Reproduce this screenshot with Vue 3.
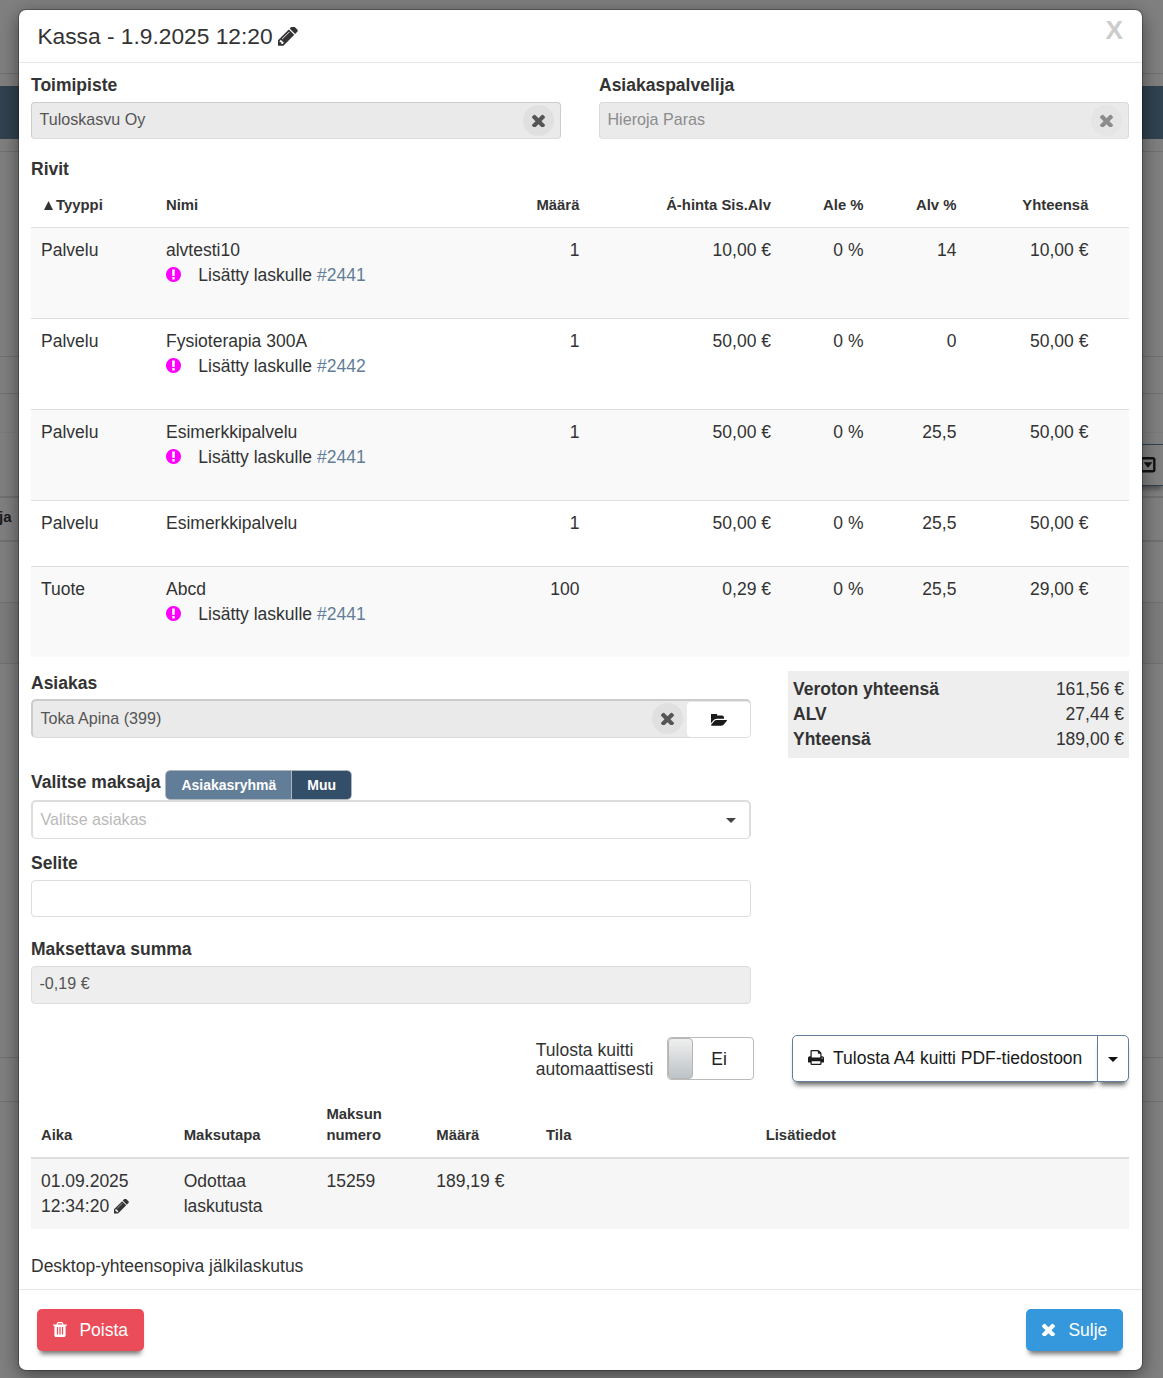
<template>
  <div class="page">
    <div class="underlay">
      <div class="strip top"></div>
      <div class="strip gap"></div>
      <div class="strip navbar"></div>
      <div class="strip gap-line"></div>
      <div class="strip h205"></div>
      <div class="strip h37"></div>
      <div class="strip h39"></div>
      <div class="strip h11"></div>
      <div class="strip toolbar">
        <svg class="square-caret" viewBox="0 0 16 16">
          <rect x="1.3" y="1.3" width="13" height="13" rx="1.5" fill="none" stroke="currentColor" stroke-width="2.4" />
          <path d="M3.6 5.2h8.8L8 10.8z" fill="currentColor" />
        </svg>
      </div>
      <div class="strip h12"></div>
      <div class="strip heading"><b>ja</b></div>
      <div class="strip h61"></div>
      <div class="strip h61 striped"></div>
      <div class="strip h394"></div>
      <div class="strip h44"></div>
    </div>

    <div class="modal">
      <header class="modal-header">
        <h4>
          Kassa - 1.9.2025 12:20
          <svg class="icon pencil" viewBox="128 256 1536 1408"><path :d="icons.pencil" /></svg>
        </h4>
        <button class="close">X</button>
      </header>

      <div class="modal-body">
        <div class="top-fields">
          <div>
            <label>Toimipiste</label>
            <div class="select disabled">
              <span>Tuloskasvu Oy</span>
              <i class="clear"><svg viewBox="302 302 1188 1188"><path :d="icons.times" /></svg></i>
            </div>
          </div>
          <div>
            <label>Asiakaspalvelija</label>
            <div class="select disabled faded">
              <span>Hieroja Paras</span>
              <i class="clear"><svg viewBox="302 302 1188 1188"><path :d="icons.times" /></svg></i>
            </div>
          </div>
        </div>

        <label class="rows-label">Rivit</label>
        <table class="rows">
          <colgroup>
            <col class="c-type" /><col class="c-name" /><col class="c-amount" /><col class="c-price" />
            <col class="c-pct" /><col class="c-pct" /><col class="c-total" /><col class="c-rest" />
          </colgroup>
          <thead>
            <tr>
              <th><svg class="sort" viewBox="0 0 9 9"><path d="M4.5 0L9 9H0z" /></svg>Tyyppi</th>
              <th>Nimi</th>
              <th class="num">Määrä</th>
              <th class="num">Á-hinta Sis.Alv</th>
              <th class="num">Ale %</th>
              <th class="num">Alv %</th>
              <th class="num">Yhteensä</th>
              <th></th>
            </tr>
          </thead>
          <tbody>
            <tr v-for="(row, i) in rows" :key="i">
              <td>{{ row.type }}</td>
              <td>
                {{ row.name }}
                <div v-if="row.invoice" class="invoiced">
                  <svg viewBox="128 128 1536 1536"><path :d="icons.exclamation" /></svg>
                  <span>Lisätty laskulle <a>{{ row.invoice }}</a></span>
                </div>
              </td>
              <td class="num">{{ row.amount }}</td>
              <td class="num">{{ row.price }}</td>
              <td class="num">0 %</td>
              <td class="num">{{ row.vat }}</td>
              <td class="num">{{ row.total }}</td>
              <td></td>
            </tr>
          </tbody>
        </table>

        <div class="middle">
          <div class="form">
            <label>Asiakas</label>
            <div class="select large disabled">
              <span>Toka Apina (399)</span>
              <i class="clear"><svg viewBox="302 302 1188 1188"><path :d="icons.times" /></svg></i>
              <button class="open">
                <svg viewBox="0 256 1815 1280"><path :d="icons.folder" /></svg>
              </button>
            </div>

            <div class="payer-label">
              <label>Valitse maksaja</label>
              <div class="btn-group">
                <button>Asiakasryhmä</button>
                <button class="active">Muu</button>
              </div>
            </div>
            <div class="select large payer">
              <span>Valitse asiakas</span>
              <b class="caret"></b>
            </div>

            <label class="selite">Selite</label>
            <div class="text-input"></div>

            <label class="summa">Maksettava summa</label>
            <div class="text-input readonly">-0,19 €</div>
          </div>

          <div class="totals">
            <div><b>Veroton yhteensä</b><span>161,56 €</span></div>
            <div><b>ALV</b><span>27,44 €</span></div>
            <div><b>Yhteensä</b><span>189,00 €</span></div>
          </div>
        </div>

        <div class="print-row">
          <div class="print-text">Tulosta kuitti<br />automaattisesti</div>
          <div class="switch"><i></i><span>Ei</span></div>
          <div class="print-btn">
            <button class="main">
              <svg viewBox="64 128 1664 1536"><path :d="icons.print" /></svg>
              Tulosta A4 kuitti PDF-tiedostoon
            </button>
            <button class="drop"><b class="caret"></b></button>
          </div>
        </div>

        <table class="payments">
          <thead>
            <tr>
              <th v-for="h in paymentHeads" :key="h">{{ h }}</th>
            </tr>
          </thead>
          <tbody>
            <tr>
              <td>
                01.09.2025 12:34:20
                <svg class="icon pencil" viewBox="128 256 1536 1408"><path :d="icons.pencil" /></svg>
              </td>
              <td>Odottaa laskutusta</td>
              <td>15259</td>
              <td>189,19 €</td>
              <td></td>
              <td></td>
            </tr>
          </tbody>
        </table>
        <p class="note">Desktop-yhteensopiva jälkilaskutus</p>
      </div>

      <footer class="modal-footer">
        <button class="btn danger">
          <svg viewBox="192 128 1408 1536"><path :d="icons.trash" /></svg>Poista
        </button>
        <button class="btn primary">
          <svg class="x" viewBox="302 302 1188 1188"><path :d="icons.times" /></svg>Sulje
        </button>
      </footer>
    </div>
  </div>
</template>

<script setup>
const rows = [
  { type: 'Palvelu', name: 'alvtesti10', invoice: '#2441', amount: '1', price: '10,00 €', vat: '14', total: '10,00 €' },
  { type: 'Palvelu', name: 'Fysioterapia 300A', invoice: '#2442', amount: '1', price: '50,00 €', vat: '0', total: '50,00 €' },
  { type: 'Palvelu', name: 'Esimerkkipalvelu', invoice: '#2441', amount: '1', price: '50,00 €', vat: '25,5', total: '50,00 €' },
  { type: 'Palvelu', name: 'Esimerkkipalvelu', invoice: '', amount: '1', price: '50,00 €', vat: '25,5', total: '50,00 €' },
  { type: 'Tuote', name: 'Abcd', invoice: '#2441', amount: '100', price: '0,29 €', vat: '25,5', total: '29,00 €' }
]

const paymentHeads = ['Aika', 'Maksutapa', 'Maksun numero', 'Määrä', 'Tila', 'Lisätiedot']

const icons = {
  pencil: 'M491 1536l91-91-235-235-91 91v107h128v128h107zm523-928q0-22-22-22-10 0-17 7l-542 542q-7 7-7 17 0 22 22 22 10 0 17-7l542-542q7-7 7-17zm-54-192l416 416-832 832h-416v-416zm683 96q0 53-37 90l-166 166-416-416 166-165q36-38 90-38 53 0 91 38l235 234q37 39 37 91z',
  times: 'M1490 1322q0 40-28 68l-136 136q-28 28-68 28t-68-28l-294-294-294 294q-28 28-68 28t-68-28l-136-136q-28-28-28-68t28-68l294-294-294-294q-28-28-28-68t28-68l136-136q28-28 68-28t68 28l294 294 294-294q28-28 68-28t68 28l136 136q28 28 28 68t-28 68l-294 294 294 294q28 28 28 68z',
  exclamation: 'M896 128q209 0 385.5 103t279.5 279.5 103 385.5-103 385.5-279.5 279.5-385.5 103-385.5-103-279.5-279.5-103-385.5 103-385.5 279.5-279.5 385.5-103zm128 1247v-190q0-14-9-23.5t-22-9.5h-192q-13 0-23 10t-10 23v190q0 13 10 23t23 10h192q13 0 22-9.5t9-23.5zm-2-344l18-621q0-12-10-18-10-8-24-8h-220q-14 0-24 8-10 6-10 18l17 621q0 10 10 17.5t24 7.5h185q14 0 23.5-7.5t10.5-17.5z',
  folder: 'M1815 952q0 31-31 66l-336 396q-43 51-120.5 86.5t-143.5 35.5h-1088q-34 0-60.5-13t-26.5-43q0-31 31-66l336-396q43-51 120.5-86.5t143.5-35.5h1088q34 0 60.5 13t26.5 43zm-343-344v160h-832q-94 0-197 47.5t-164 119.5l-337 396-5 6q0-4-.5-12.5t-.5-12.5v-960q0-92 66-158t158-66h320q92 0 158 66t66 158v32h544q92 0 158 66t66 158z',
  print: 'M448 1536h896v-256h-896v256zm0-640h896v-384h-160q-40 0-68-28t-28-68v-160h-640v640zm1152 64q0-26-19-45t-45-19-45 19-19 45 19 45 45 19 45-19 19-45zm128 0v416q0 13-9.5 22.5t-22.5 9.5h-224v160q0 40-28 68t-68 28h-960q-40 0-68-28t-28-68v-160h-224q-13 0-22.5-9.5t-9.5-22.5v-416q0-79 56.5-135.5t135.5-56.5h64v-544q0-40 28-68t68-28h672q40 0 88 20t76 48l152 152q28 28 48 76t20 88v256h64q79 0 135.5 56.5t56.5 135.5z',
  trash: 'M704 1376v-704q0-14-9-23t-23-9h-64q-14 0-23 9t-9 23v704q0 14 9 23t23 9h64q14 0 23-9t9-23zm256 0v-704q0-14-9-23t-23-9h-64q-14 0-23 9t-9 23v704q0 14 9 23t23 9h64q14 0 23-9t9-23zm256 0v-704q0-14-9-23t-23-9h-64q-14 0-23 9t-9 23v704q0 14 9 23t23 9h64q14 0 23-9t9-23zm-544-992h448l-48-117q-7-9-17-11h-317q-10 2-17 11zm928 32v64q0 14-9 23t-23 9h-96v948q0 83-47 143.5t-113 60.5h-832q-66 0-113-58.5t-47-141.5v-952h-96q-14 0-23-9t-9-23v-64q0-14 9-23t23-9h309l70-167q15-37 54-63t79-26h320q40 0 79 26t54 63l70 167h309q14 0 23 9t9 23z'
}
</script>

<style scoped>
* {
  box-sizing: border-box;
}
.page {
  display: grid;
  width: 1163px;
  height: 1378px;
  overflow: hidden;
  background: #808080;
  color: #333;
  font-family: "Liberation Sans", Arial, sans-serif;
  font-size: 17.5px;
  line-height: 25px;
}
svg {
  fill: currentColor;
  display: block;
}
button {
  font: inherit;
  color: inherit;
  border: 0;
  padding: 0;
  background: none;
}

/* dimmed page behind the dialog */
.underlay,
.modal {
  grid-area: 1 / 1;
}
.strip {
  border-bottom: 1px solid #717171;
}
.strip.top { height: 74px; }
.strip.gap { height: 12px; border: 0; }
.strip.navbar { height: 53px; border: 0; background: #314250; }
.strip.gap-line { height: 13px; }
.strip.h205 { height: 205px; }
.strip.h37 { height: 37px; }
.strip.h39 { height: 39px; border-color: #7a7a7a; }
.strip.h11 { height: 11px; border: 0; }
.strip.toolbar {
  height: 42px;
  border: 1px solid #314250;
  border-width: 1px 0;
  box-shadow: 0 4px 5px -1px rgba(0, 0, 0, 0.4);
  display: flex;
  align-items: center;
  justify-content: flex-end;
  padding-right: 7px;
  margin-left: 600px;
}
.square-caret {
  width: 16px;
  height: 16px;
  color: #111;
}
.strip.h12 { height: 12px; border-bottom-width: 2px; }
.strip.heading {
  height: 44px;
  border-bottom-width: 2px;
  font-size: 15px;
  line-height: 38px;
  color: #1a1a1a;
}
.strip.heading b { margin-left: -1px; }
.strip.h61 { height: 61px; }
.strip.striped { background: #7c7c7c; }
.strip.h394 { height: 394px; }
.strip.h44 { height: 44px; }

.modal {
  display: flex;
  flex-direction: column;
  margin: 10px 21px 8px 19px;
  background: #fff;
  border-radius: 7px;
  box-shadow: 0 0 0 1px rgba(0, 0, 0, 0.25), 0 5px 19px rgba(0, 0, 0, 0.5);
}
.modal-header {
  display: flex;
  justify-content: space-between;
  height: 53px;
  padding: 0 19px 0 18.4px;
  border-bottom: 1px solid #e5e5e5;
}
.modal-header h4 {
  display: flex;
  margin: 0;
  font-size: 22.75px;
  font-weight: 400;
  line-height: 52px;
}
.modal-header .pencil {
  width: 20px;
  height: 19px;
  margin: 17px 0 0 5.5px;
}
.close {
  height: 40px;
  font-size: 26.25px;
  font-weight: 700;
  color: #ccc;
}

.modal-body {
  padding: 10px 13px 0 12px;
}
label {
  display: block;
  font-weight: 700;
}
.top-fields {
  display: grid;
  grid-template-columns: 530px 530px;
  justify-content: space-between;
}
.top-fields .select {
  margin-top: 4px;
}
.select {
  display: flex;
  align-items: center;
  height: 37px;
  padding: 0 6px 0 7.5px;
  border: 1px solid #ddd;
  border-color: #ccc #ccc #ddd;
  border-radius: 4px;
  font-size: 16.1px;
  color: #555;
}
.select span {
  flex: 1;
  line-height: 24px;
  padding-bottom: 4px;
}
.select.disabled {
  background: #eaeaea;
}
.select.faded {
  color: #8c8c8c;
  border-color: #d9d9d9 #d9d9d9 #e4e4e4;
}
.clear {
  display: flex;
  align-items: center;
  justify-content: center;
  width: 31px;
  height: 31px;
  border-radius: 50%;
  background: #e0e0e0;
}
.clear svg {
  width: 13px;
  height: 13px;
}
.faded .clear {
  background: #e5e5e5;
}
.select.large {
  height: 39px;
  padding: 0 0 0 7.5px;
  border-width: 2px 1px 1px 2px;
  border-color: #ccc #ddd #ddd #ccc;
  border-radius: 5px;
}
.select.large span {
  padding-bottom: 3px;
}
.select.large .clear {
  margin-bottom: 1px;
}
.open {
  display: flex;
  align-items: center;
  justify-content: center;
  width: 63px;
  height: 35px;
  margin-left: 4px;
  background: #fff;
  border-radius: 4px;
  color: #1a1a1a;
}
.open svg {
  width: 16px;
  height: 12px;
  margin-top: 1px;
}

.rows-label {
  margin-top: 18px;
}
table {
  width: 100%;
  table-layout: fixed;
  border-collapse: collapse;
}
th {
  padding: 10px;
  font-size: 14.875px;
  line-height: 21px;
  text-align: left;
  vertical-align: bottom;
}
td {
  padding: 10px;
  vertical-align: top;
}
.num {
  text-align: right;
}
.rows {
  margin-top: 2px;
  border-collapse: separate;
  border-spacing: 0;
}
.rows th {
  height: 43px;
  padding-bottom: 11px;
}
.rows td {
  padding-bottom: 30px;
  border-top: 1px solid #ddd;
}
.rows .num {
  padding-right: 9.6px;
}
.rows .num:nth-child(4),
.rows .num:nth-child(5) {
  padding-right: 10px;
}
.rows tbody tr:nth-child(odd) {
  background: #f9f9f9;
}
.c-type { width: 125px; }
.c-name { width: 343px; }
.c-amount { width: 90px; }
.c-price { width: 192px; }
.c-pct { width: 92.5px; }
.c-total { width: 132px; }
.c-rest { width: 31px; }
.sort {
  display: inline-block;
  width: 9px;
  height: 9px;
  margin: 0 3px 0 3px;
}
.invoiced {
  display: flex;
  align-items: center;
  gap: 17.3px;
}
.invoiced svg {
  width: 15px;
  height: 15px;
  margin-bottom: 2px;
  color: #f0f;
}
.invoiced a {
  color: #627d98;
}

.middle {
  display: flex;
  justify-content: space-between;
  align-items: flex-start;
  margin-top: 14px;
}
.form {
  width: 720px;
}
.form > .select.disabled {
  margin-top: 3px;
}
.payer-label {
  display: flex;
  gap: 5px;
  margin-top: 32px;
}
.btn-group {
  display: flex;
  height: 30px;
  border: 1px solid #b0b6bd;
  border-radius: 5px;
  overflow: hidden;
  color: #fff;
  font-size: 14px;
  font-weight: 700;
}
.btn-group button {
  padding: 0 15px;
  background: #627d98;
}
.btn-group .active {
  background: #334e68;
  border-left: 1px solid #b0b6bd;
}
.select.payer {
  border-width: 2px 2px 1px;
  border-color: #ddd;
  color: #b9b9b9;
  padding-right: 13px;
}
.caret {
  border: 5px solid transparent;
  border-top-color: #444;
  border-bottom: 0;
}
.selite {
  margin-top: 12px;
}
.text-input {
  height: 37px;
  margin-top: 4px;
  padding: 0 7.5px;
  border: 1px solid #ddd;
  border-radius: 4px;
  font-size: 16.1px;
  line-height: 32px;
  color: #555;
}
.summa {
  margin-top: 20px;
}
.text-input.readonly {
  height: 38px;
  background: #eee;
}
.totals {
  width: 341px;
  padding: 6px 5px;
  background: #eee;
}
.totals div {
  display: flex;
  justify-content: space-between;
}

.print-row {
  display: flex;
  justify-content: flex-end;
  align-items: flex-start;
  margin-top: 31px;
}
.print-text {
  margin-top: 6px;
  line-height: 19px;
}
.switch {
  display: flex;
  width: 87px;
  height: 43px;
  margin: 2px 38px 0 13.5px;
  border: 1px solid #bbb;
  border-radius: 4px;
}
.switch i {
  width: 25px;
  border: 1px solid #b5b5b5;
  border-radius: 4px;
  background: linear-gradient(#efefef, #bdc3c7);
}
.switch span {
  flex: 1;
  padding-right: 8px;
  text-align: center;
  line-height: 42px;
  color: #222;
}
.print-btn {
  display: flex;
  width: 337px;
  height: 47px;
  color: #1a1a1a;
}
.print-btn button {
  display: flex;
  align-items: center;
  border: 1px solid #627d98;
  background: #fff;
  box-shadow: 0 6px 5px -3px rgba(0, 0, 0, 0.6);
}
.print-btn .main {
  width: 306px;
  padding-left: 15px;
  border-radius: 5px 0 0 5px;
  white-space: nowrap;
}
.print-btn .main svg {
  width: 16px;
  height: 15px;
  margin: 0 9px 2px 0;
}
.print-btn .drop {
  flex: 1;
  justify-content: center;
  margin-left: -1px;
  border-radius: 0 5px 5px 0;
}
.drop .caret {
  margin-top: 2px;
  border-top-color: #111;
}

.payments {
  margin-top: 12px;
}
.payments th:nth-child(-n + 2) { width: 13%; }
.payments th:nth-child(3),
.payments th:nth-child(4) { width: 10%; }
.payments th:nth-child(5) { width: 20%; }
.payments th {
  padding-bottom: 11px;
}
.payments thead {
  border-bottom: 2px solid #ddd;
}
.payments tbody tr {
  background: #f6f6f6;
}
.payments td .pencil {
  display: inline-block;
  width: 15px;
  height: 15px;
  vertical-align: -2px;
}
.note {
  margin: 25px 0 0;
}

.modal-footer {
  display: flex;
  justify-content: space-between;
  align-items: flex-start;
  height: 81px;
  margin-top: auto;
  padding: 19px 19px 0 18px;
  border-top: 1px solid #e5e5e5;
}
.btn {
  display: flex;
  align-items: center;
  height: 42px;
  padding: 0 15.7px 0 16px;
  border-radius: 5px;
  color: #fff;
  box-shadow: 0 6px 5px -3px rgba(0, 0, 0, 0.55);
}
.btn svg {
  width: 14px;
  height: 15px;
  margin: 0 12.4px 1px 0;
}
.btn svg.x {
  width: 13px;
  height: 13px;
  margin-right: 13px;
}
.btn.danger { background: #ea4c5a; }
.btn.primary { background: #3598dc; }
</style>

<style>
body {
  margin: 0;
}
</style>
